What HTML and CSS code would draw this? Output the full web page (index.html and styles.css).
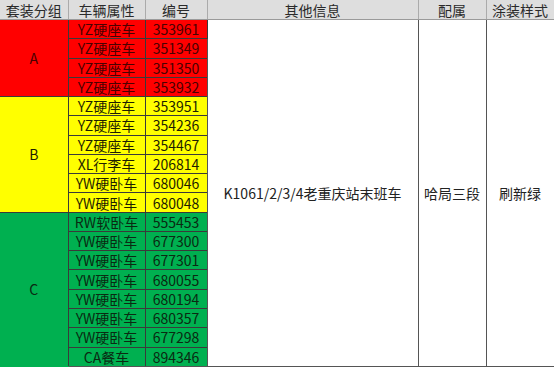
FILE: index.html
```html
<!DOCTYPE html>
<html lang="zh">
<head>
<meta charset="utf-8">
<link rel="stylesheet" href="styles.css">
</head>
<body>
<table class="sheet">
<colgroup>
<col class="c1"><col class="c2"><col class="c3"><col class="c4"><col class="c5"><col class="c6">
</colgroup>
<thead>
<tr><th>套装分组</th><th>车辆属性</th><th>编号</th><th>其他信息</th><th>配属</th><th>涂装样式</th></tr>
</thead>
<tbody>
<tr class="red"><td rowspan="4" class="grp">A</td><td>YZ硬座车</td><td>353961</td><td rowspan="18" class="plain">K1061/2/3/4老重庆站末班车</td><td rowspan="18" class="plain">哈局三段</td><td rowspan="18" class="plain last">刷新绿</td></tr>
<tr class="red"><td>YZ硬座车</td><td>351349</td></tr>
<tr class="red"><td>YZ硬座车</td><td>351350</td></tr>
<tr class="red"><td>YZ硬座车</td><td>353932</td></tr>
<tr class="yellow"><td rowspan="6" class="grp">B</td><td>YZ硬座车</td><td>353951</td></tr>
<tr class="yellow"><td>YZ硬座车</td><td>354236</td></tr>
<tr class="yellow"><td>YZ硬座车</td><td>354467</td></tr>
<tr class="yellow"><td>XL行李车</td><td>206814</td></tr>
<tr class="yellow"><td>YW硬卧车</td><td>680046</td></tr>
<tr class="yellow"><td>YW硬卧车</td><td>680048</td></tr>
<tr class="green"><td rowspan="8" class="grp grp-last">C</td><td>RW软卧车</td><td>555453</td></tr>
<tr class="green"><td>YW硬卧车</td><td>677300</td></tr>
<tr class="green"><td>YW硬卧车</td><td>677301</td></tr>
<tr class="green"><td>YW硬卧车</td><td>680055</td></tr>
<tr class="green"><td>YW硬卧车</td><td>680194</td></tr>
<tr class="green"><td>YW硬卧车</td><td>680357</td></tr>
<tr class="green"><td>YW硬卧车</td><td>677298</td></tr>
<tr class="green"><td>CA餐车</td><td>894346</td></tr>
</tbody>
</table>
</body>
</html>
```
FILE: styles.css
```css
html, body {
  margin: 0;
  padding: 0;
  background: #ffffff;
}
.sheet {
  border-collapse: collapse;
  table-layout: fixed;
  width: 554px;
  font-family: "Noto Sans CJK SC", "Noto Sans", sans-serif;
  font-size: 14px;
  line-height: 18px;
  color: #222222;
}
.c1 { width: 68px; }
.c2 { width: 77px; }
.c3 { width: 62px; }
.c4 { width: 211px; }
.c5 { width: 68px; }
.c6 { width: 68px; }
.sheet th {
  height: 19px;
  padding: 0;
  font-weight: normal;
  background: #dedede;
  color: #2a2a2a;
  border-left: 1px solid #ababab;
  border-right: 1px solid #ababab;
  border-bottom: 1px solid #9a9a9a;
  text-align: center;
}
.sheet th:first-child { border-left: none; }
.sheet td {
  padding: 0;
  text-align: center;
  vertical-align: middle;
  border: 1px solid #3a3a3a;
}
.sheet tbody tr { height: 19.28px; }
.sheet td.grp { border-left: none; }
.red td { background: #ff0000; color: #4a0000; }
.yellow td { background: #ffff00; color: #1e1e00; }
.green td { background: #00b050; color: #0a2a12; }
.sheet td.plain {
  background: #ffffff;
  color: #222222;
  border: 1px solid #555555;
}
.sheet td.last { border-left-color: #9a9a9a; }
.sheet tbody tr:last-child td { border-bottom: 1px solid #555555; }
.sheet td.grp-last { border-bottom-color: #00b050; }
```
